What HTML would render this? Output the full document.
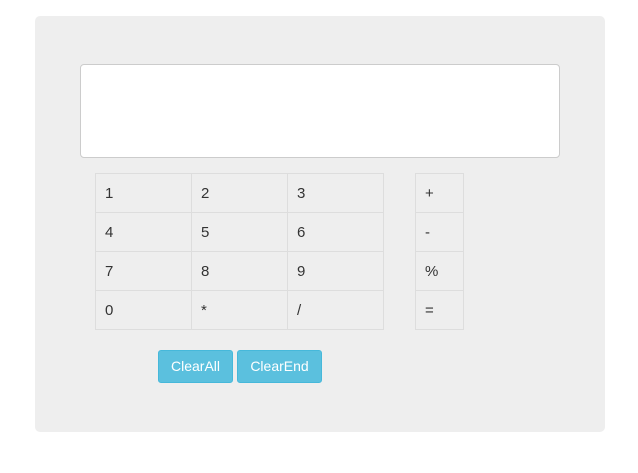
<!DOCTYPE html><html><head><style>
body{margin:0;background:#fff;font-family:"Liberation Sans",Arial,sans-serif;width:638px;height:473px;position:relative}
.p{position:absolute;left:35px;top:16px;width:570px;height:416px;background:#eee;border-radius:5px}
.ta{position:absolute;left:80px;top:64px;width:478px;height:92px;background:#fff;border:1px solid #ccc;border-radius:4px}
table{position:absolute;border-collapse:collapse;font-size:15px;color:#333}
td{border:1px solid #ddd;height:39px;padding:0 0 0 9px;box-sizing:border-box}
.b{position:absolute;top:350px;height:33px;background:#5bc0de;border:1px solid #46b8da;border-radius:3px;color:#fff;font-size:14px;line-height:31px;text-align:center;box-sizing:border-box}
</style></head><body>
<div class="p"></div><div class="ta"></div>
<table style="left:95px;top:173px"><tr><td style="width:96px">1</td><td style="width:96px">2</td><td style="width:96px">3</td></tr><tr><td>4</td><td>5</td><td>6</td></tr><tr><td>7</td><td>8</td><td>9</td></tr><tr><td>0</td><td>*</td><td>/</td></tr></table>
<table style="left:415px;top:173px"><tr><td style="width:48px">+</td></tr><tr><td>-</td></tr><tr><td>%</td></tr><tr><td>=</td></tr></table>
<div class="b" style="left:158px;width:75px">ClearAll</div>
<div class="b" style="left:237px;width:85px">ClearEnd</div>
</body></html>
